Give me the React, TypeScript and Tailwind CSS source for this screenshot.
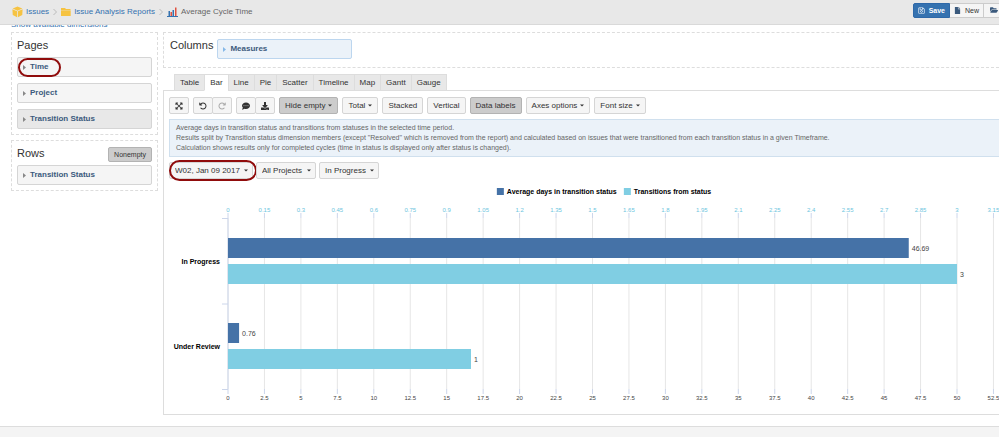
import {useState} from 'react';
import type {ReactNode} from 'react';
import clsx from 'clsx';
import {
  FaCommentDots,
  FaDownload,
  FaExpandArrowsAlt,
  FaFile,
  FaFolderOpen,
  FaRegSave,
} from 'react-icons/fa';
import {FaArrowRotateLeft, FaArrowRotateRight} from 'react-icons/fa6';

const tabs = ['Table', 'Bar', 'Line', 'Pie', 'Scatter', 'Timeline', 'Map', 'Gantt', 'Gauge'];

const filters = [
  {label: 'Time', value: 'W02, Jan 09 2017', marked: true},
  {label: 'Project', value: 'All Projects'},
  {label: 'Transition Status', value: 'In Progress'},
];

const rows = [
  {status: 'In Progress', days: 46.69, transitions: 3},
  {status: 'Under Review', days: 0.76, transitions: 1},
];

export default function App() {
  return (
    <div className="flex min-h-screen flex-col overflow-hidden bg-white font-['Liberation_Sans',Arial,sans-serif] text-[8px] leading-[10px] text-[#333]">
      <Header />
      <div className="-mt-[5px] pl-[11px]">
        <a href="#dimensions" className="block w-fit text-[#3572b0]">
          Show available dimensions
        </a>
      </div>
      <div className="mt-[2px] flex gap-[5px] pl-[11px]">
        <Sidebar />
        <main className="min-w-0 flex-1">
          <section className="flex h-9 items-start gap-1 border border-r-0 border-dashed border-[#ddd] pl-1.5 pt-1.5">
            <h2 className="text-[11px] leading-3">Columns</h2>
            <div className="w-[135px]">
              <Dimension name="Measures" tone="blue" />
            </div>
          </section>
          <Report />
        </main>
      </div>
      <footer className="mt-[11px] flex-1 border-t border-[#ddd] bg-[#f4f4f4]" />
    </div>
  );
}

function Header() {
  return (
    <header className="relative z-10 flex h-[25px] items-center justify-between border-b border-[#d9d9d9] bg-[#e8e8e8] pl-3">
      <nav className="flex items-center gap-[3px] text-[#3572b0]">
        <CubeIcon />
        <a href="#issues">Issues</a>
        <Chevron />
        <FolderIcon />
        <a href="#reports">Issue Analysis Reports</a>
        <Chevron />
        <ChartIcon />
        <span className="text-[#666]">Average Cycle Time</span>
      </nav>
      <div className="-mr-1.5 mb-1 flex h-[15px] text-[7px] leading-[9px]">
        <button className="flex items-center gap-1 rounded-l-xs border border-[#2e68a8] bg-[#3572b0] px-1 text-white">
          <FaRegSave size={7} />
          <span className="font-bold">Save</span>
        </button>
        <button className="flex items-center gap-1 border border-l-0 border-[#ccc] bg-[#f5f5f5] px-1">
          <FaFile size={7} className="text-[#3b5a7d]" />
          New
        </button>
        <button aria-label="Open" className="border border-l-0 border-[#ccc] bg-[#f5f5f5] px-1.5">
          <FaFolderOpen size={8} className="text-[#3b5a7d]" />
        </button>
      </div>
    </header>
  );
}

function Sidebar() {
  return (
    <aside className="w-[147px] shrink-0 space-y-[5px]">
      <section className="border border-dashed border-[#ddd] px-[5px] pb-[5px] pt-1.5">
        <h2 className="pb-1.5 text-[11px] leading-3">Pages</h2>
        <div className="space-y-1.5">
          <Dimension name="Time" marked />
          <Dimension name="Project" />
          <Dimension name="Transition Status" tone="dark" />
        </div>
      </section>
      <section className="border border-dashed border-[#ddd] px-[5px] pb-[5px] pt-1.5">
        <div className="flex items-start justify-between pb-[3px]">
          <h2 className="text-[11px] leading-3">Rows</h2>
          <button className="h-[15px] rounded-xs border border-[#b3b3b3] bg-[#ccc] px-[5px] text-[7px] leading-[9px]">
            Nonempty
          </button>
        </div>
        <Dimension name="Transition Status" />
      </section>
    </aside>
  );
}

function Dimension({
  name,
  tone = 'light',
  marked,
}: {
  name: string;
  tone?: 'light' | 'dark' | 'blue';
  marked?: boolean;
}) {
  return (
    <button
      className={clsx(
        'relative flex h-5 w-full items-center gap-1 rounded-xs border px-[5px] font-bold text-[#3b5a7d]',
        tone === 'light' && 'border-[#d5d5d5] bg-[#f5f5f5]',
        tone === 'dark' && 'border-[#d5d5d5] bg-[#e8e8e8]',
        tone === 'blue' && 'border-[#bcd6ef] bg-[#ebf2f9]',
      )}
    >
      <svg
        width="3"
        height="5"
        fill="currentColor"
        className={tone === 'blue' ? 'text-[#85b8e8]' : 'text-[#888]'}
      >
        <path d="M0 0l3 2.500L0 5z" />
      </svg>
      {name}
      {marked && (
        <span className="absolute left-0 top-0 h-[19px] w-[43px] rounded-full border-2 border-[#900c0c]" />
      )}
    </button>
  );
}

function Report() {
  const [tab, setTab] = useState('Bar');

  return (
    <section className="pt-1.5">
      <div role="tablist" className="relative -mb-px flex h-[17px] pl-[11px]">
        {tabs.map((name) => (
          <button
            key={name}
            role="tab"
            aria-selected={tab === name}
            onClick={() => setTab(name)}
            className={clsx(
              '-mr-px border border-[#ddd] px-[5px]',
              tab === name ? 'border-b-white bg-white' : 'bg-[#e8e8e8]',
            )}
          >
            {name}
          </button>
        ))}
      </div>
      <div className="border border-r-0 border-[#ddd] pl-[5px] pt-1.5">
        <div className="flex gap-1">
          <ToolButton label="Fullscreen">
            <FaExpandArrowsAlt size={8} />
          </ToolButton>
          <div className="flex">
            <ToolButton label="Undo">
              <FaArrowRotateLeft size={8} />
            </ToolButton>
            <ToolButton label="Redo" joined>
              <FaArrowRotateRight size={8} className="text-[#aaa]" />
            </ToolButton>
          </div>
          <div className="flex">
            <ToolButton label="Comment">
              <FaCommentDots size={8} />
            </ToolButton>
            <ToolButton label="Export" joined>
              <FaDownload size={8} />
            </ToolButton>
          </div>
          <ToolButton menu active>Hide empty</ToolButton>
          <ToolButton menu>Total</ToolButton>
          <ToolButton>Stacked</ToolButton>
          <ToolButton>Vertical</ToolButton>
          <ToolButton active>Data labels</ToolButton>
          <ToolButton menu>Axes options</ToolButton>
          <ToolButton menu>Font size</ToolButton>
        </div>
        <div className="mt-[5px] whitespace-nowrap border border-r-0 border-[#d0e0ee] bg-[#ebf2f9] px-1.5 py-[3px] text-[7px] leading-[10px] text-[#666]">
          <p>Average days in transition status and transitions from statuses in the selected time period.</p>
          <p>
            Results split by Transition status dimension members (except "Resolved" which is removed from
            the report) and calculated based on issues that were transitioned from each transition status
            in a given Timeframe.
          </p>
          <p>
            Calculation shows results only for completed cycles (time in status is displayed only after
            status is changed).
          </p>
        </div>
        <div className="mt-[5px] flex gap-[3px]">
          {filters.map((filter) => (
            <label key={filter.label} className="relative flex items-center">
              <select
                aria-label={filter.label}
                className="h-[17px] appearance-none rounded-xs border border-[#d5d5d5] bg-[#f5f5f5] pl-[5px] pr-3 leading-[10px]"
              >
                <option>{filter.value}</option>
              </select>
              <span className="pointer-events-none absolute right-[5px]">
                <Caret />
              </span>
              {filter.marked && (
                <span className="pointer-events-none absolute -inset-y-0.5 -right-1 left-0 rounded-full border-2 border-[#900c0c]" />
              )}
            </label>
          ))}
        </div>
        <BarChart />
      </div>
    </section>
  );
}

function ToolButton({
  children,
  label,
  menu,
  active,
  joined,
}: {
  children: ReactNode;
  label?: string;
  menu?: boolean;
  active?: boolean;
  joined?: boolean;
}) {
  return (
    <button
      aria-label={label}
      aria-haspopup={menu ? 'menu' : undefined}
      className={clsx(
        'flex h-[17px] items-center gap-[3px] whitespace-nowrap rounded-xs border px-[5px]',
        active ? 'border-[#b3b3b3] bg-[#ccc]' : 'border-[#d5d5d5] bg-[#f5f5f5]',
        joined && '-ml-px',
      )}
    >
      {children}
      {menu && <Caret />}
    </button>
  );
}

function Caret() {
  return (
    <svg width="4" height="3" fill="currentColor" className="block">
      <path d="M0 .5h4l-2 2z" />
    </svg>
  );
}

// Days axis runs along the bottom, transitions axis along the top
const DAYS_MAX = 52.88;
const ticks = Array.from({length: 22}, (_, i) => i);

function percent(days: number) {
  return `${(days / DAYS_MAX) * 100}%`;
}

function BarChart() {
  return (
    <svg width="100%" height="235" className="block">
      <g className="text-[7px] font-bold" fill="#000">
        <svg x="39.5%" width="240" height="30" overflow="visible">
          <rect x="0" y="9" width="7" height="7" fill="#4572a7" />
          <text x="10" y="15">Average days in transition status</text>
          <rect x="127" y="9" width="7" height="7" fill="#80cee3" />
          <text x="137" y="15">Transitions from status</text>
        </svg>
      </g>
      <svg x="59" y="0" height="235" className="w-[calc(100%-59px)]" overflow="visible">
        {ticks.map((i) => (
          <g key={i} className="text-[6px]" textAnchor="middle">
            <line x1={percent(i * 2.5)} x2={percent(i * 2.5)} y1="39" y2="210" stroke="#e6e6e6" />
            <line x1={percent(i * 2.5)} x2={percent(i * 2.5)} y1="34" y2="39" stroke="#ccd6eb" />
            <line x1={percent(i * 2.5)} x2={percent(i * 2.5)} y1="210" y2="215" stroke="#ccd6eb" />
            <text x={percent(i * 2.5)} y="33" fill="#6cc5de">{Number((i * 0.15).toFixed(2))}</text>
            <text x={percent(i * 2.5)} y="221" fill="#444">{i * 2.5}</text>
          </g>
        ))}
        <path d="M0 39V210M-6 39.500H0M-6 125H0M-6 210.500H0" stroke="#ccd6eb" fill="none" />
        {rows.map((row, i) => (
          <svg key={row.status} y={59 + i * 85} overflow="visible">
            <text x="-8" y="26" textAnchor="end" className="text-[7px] font-bold" fill="#000">
              {row.status}
            </text>
            <rect width={percent(row.days)} height="20" fill="#4572a7" />
            <rect y="26" width={percent(row.transitions * (50 / 3))} height="20" fill="#80cee3" />
            <g className="text-[7px]" fill="#444">
              <text x={percent(row.days)} dx="3" y="13">{row.days}</text>
              <text x={percent(row.transitions * (50 / 3))} dx="3" y="39">{row.transitions}</text>
            </g>
          </svg>
        ))}
      </svg>
    </svg>
  );
}

function Chevron() {
  return (
    <svg width="6" height="10" viewBox="0 0 6 10" fill="none" stroke="#bbb">
      <path d="M1.500 2l3 3-3 3" />
    </svg>
  );
}

function CubeIcon() {
  return (
    <svg width="11" height="12" viewBox="0 0 12 12" fill="#f6c342">
      <path d="M6 0l5.300 2.300L6 4.600.7 2.300z" />
      <path d="M.4 3l5.200 2.300v6.300L.8 9.200z" />
      <path d="M11.600 3L6.400 5.300v6.300l4.800-2.400z" />
    </svg>
  );
}

function FolderIcon() {
  return (
    <svg width="10" height="10" viewBox="0 0 10 10" fill="#f6c342">
      <path d="M0 1h4l1 1h4.500v1H0z" />
      <path d="M0 3.300h9.700V9H0z" />
    </svg>
  );
}

function ChartIcon() {
  return (
    <svg width="11" height="12" viewBox="0 0 11 12">
      <path d="M1.500 5H3v5H1.500zM5.500 4H7v6H5.500z" fill="#3572b0" />
      <path d="M3.500 6H5v4H3.500zM8 1.500h1.500V10H8z" fill="#e0503f" />
      <path d="M0 10.500h11" stroke="#3572b0" />
    </svg>
  );
}
